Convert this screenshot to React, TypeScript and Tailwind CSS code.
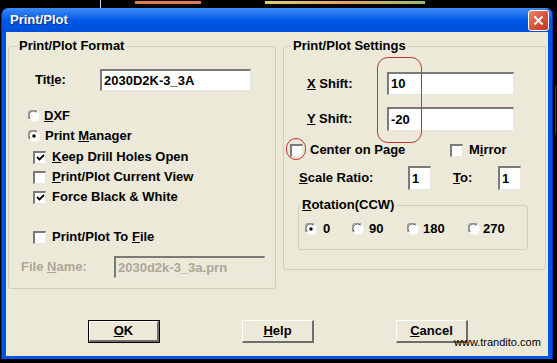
import React from "react"

const font = { fontFamily: '"Liberation Sans", Arial, sans-serif' }

function Radio({ checked }: { checked?: boolean }) {
    return (
        <svg width="12" height="12" viewBox="0 0 12 12" className="shrink-0">
            <circle cx="6" cy="6" r="5.5" fill="#fff" />
            <path d="M1.2 9 A5.5 5.5 0 0 1 9 1.2" fill="none" stroke="#808080" strokeWidth="1" />
            <path d="M2.2 8.6 A4.5 4.5 0 0 1 8.6 2.2" fill="none" stroke="#404040" strokeWidth="1" />
            <path d="M10.8 3 A5.5 5.5 0 0 1 3 10.8" fill="none" stroke="#f4f4f4" strokeWidth="1" />
            {checked && <circle cx="6" cy="6" r="1.7" fill="#000" />}
        </svg>
    )
}

function Check({ checked }: { checked?: boolean }) {
    return (
        <span className="w-[13px] h-[13px] shrink-0 bg-white border-t-2 border-l-2 border-t-[#7a7a7a] border-l-[#7a7a7a] border-b border-r border-b-[#e8e8e8] border-r-[#e8e8e8] flex items-center justify-center">
            {checked && (
                <svg width="9" height="9" viewBox="0 0 9 9">
                    <path d="M1 4 L3.5 6.5 L8 2" fill="none" stroke="#000" strokeWidth="1.8" />
                </svg>
            )}
        </span>
    )
}

function Field({ value, className, disabled }: { value: string; className: string; disabled?: boolean }) {
    return (
        <div
            className={`${className} ${disabled ? "bg-[#ece9d8] text-[#aca899]" : "bg-white text-black"} border-t-2 border-l-2 border-t-[#7a7a7a] border-l-[#7a7a7a] border-b border-r border-b-[#e6e6e6] border-r-[#e6e6e6] flex items-center pl-[2px] text-[13px] font-bold`}
        >
            {value}
        </div>
    )
}

function Btn({ children, primary }: { children: React.ReactNode; primary?: boolean }) {
    return (
        <div className={`w-[72px] h-[23px] ${primary ? "border border-black" : ""}`}>
            <div className="w-full h-full bg-[#ece9d8] border-t border-l border-t-white border-l-white border-b-2 border-r-2 border-b-[#6e6e6e] border-r-[#6e6e6e] flex items-center justify-center text-[13px] font-bold">
                {children}
            </div>
        </div>
    )
}

export default function App() {
    return (
        <div className="w-[557px] h-[363px] bg-black relative overflow-hidden" style={font}>
            {/* desktop bits above the window */}
            <div className="h-[8px] flex items-start">
                <div className="ml-[100px] w-[1px] h-[8px] bg-[#cfd8ff]" />
                <div className="ml-[34px] mt-[1px] w-[66px] h-[3px] bg-[#e07a58]" />
                <div className="ml-[64px] mt-[1px] w-[160px] h-[3px] bg-gradient-to-r from-[#d6d06a] via-[#e8a060] to-[#8fbf6a]" />
            </div>

            <div className="ml-[1px] w-[552px] h-[351px] rounded-t-[7px] bg-[#0054e3] border-x border-x-[#0831a8] flex flex-col">
                <div className="h-[24px] rounded-t-[7px] bg-gradient-to-b from-[#3d8cf5] via-[#0058e6] to-[#0050d8] flex items-center justify-between pl-[8px] pr-[3px]">
                    <span className="text-white text-[13px] font-bold [text-shadow:1px_1px_#0a2a8a]">Print/Plot</span>
                    <div className="w-[21px] h-[21px] rounded-[3px] border border-white bg-gradient-to-br from-[#e58a6c] via-[#d8553a] to-[#b83c22] flex items-center justify-center">
                        <svg width="11" height="11" viewBox="0 0 11 11">
                            <path d="M1.5 1.5 L9.5 9.5 M9.5 1.5 L1.5 9.5" stroke="#fff" strokeWidth="2" />
                        </svg>
                    </div>
                </div>

                <div className="mx-[4px] h-[324px] bg-[#ece9d8] text-black relative">
                    <div className="flex items-start pt-[7px]">
                        {/* left group */}
                        <fieldset className="ml-[2px] w-[268px] h-[250px] border border-[#d0d0bf] rounded-[3px] p-0">
                            <legend className="ml-[8px] px-[2px] leading-[14px] text-[13px] font-bold">Print/Plot Format</legend>
                            <div className="mt-[16px] h-[22px] flex items-center">
                                <span className="ml-[26px] w-[65px] text-[13px] font-bold">
                                    Tit<u>l</u>e:
                                </span>
                                <Field value="2030D2K-3_3A" className="w-[151px] h-[22px]" />
                            </div>
                            <div className="mt-[15px] h-[20px] flex items-center ml-[19px] gap-[4px] text-[13px] font-bold">
                                <Radio />
                                <span>
                                    <u>D</u>XF
                                </span>
                            </div>
                            <div className="h-[20px] flex items-center ml-[19px] gap-[5px] text-[13px] font-bold">
                                <Radio checked />
                                <span>
                                    Print <u>M</u>anager
                                </span>
                            </div>
                            <div className="mt-[1px] h-[20px] flex items-center ml-[24px] gap-[6px] text-[13px] font-bold">
                                <Check checked />
                                <span>
                                    <u>K</u>eep Drill Holes Open
                                </span>
                            </div>
                            <div className="h-[20px] flex items-center ml-[24px] gap-[6px] text-[13px] font-bold">
                                <Check />
                                <span>
                                    <u>P</u>rint/Plot Current View
                                </span>
                            </div>
                            <div className="h-[20px] flex items-center ml-[24px] gap-[6px] text-[13px] font-bold">
                                <Check checked />
                                <span>Force Black &amp; White</span>
                            </div>
                            <div className="mt-[20px] h-[20px] flex items-center ml-[24px] gap-[6px] text-[13px] font-bold">
                                <Check />
                                <span>
                                    Print/Plot To <u>F</u>ile
                                </span>
                            </div>
                            <div className="mt-[9px] h-[22px] flex items-center">
                                <span className="ml-[12px] w-[93px] text-[13px] font-bold text-[#aca899]">
                                    File <u>N</u>ame:
                                </span>
                                <Field value="2030d2k-3_3a.prn" className="w-[151px] h-[22px]" disabled />
                            </div>
                        </fieldset>

                        {/* right group */}
                        <fieldset className="ml-[7px] w-[263px] h-[231px] border border-[#d0d0bf] rounded-[3px] p-0">
                            <legend className="ml-[7px] px-[2px] leading-[14px] text-[13px] font-bold">Print/Plot Settings</legend>
                            <div className="mt-[19px] h-[23px] flex items-center">
                                <span className="ml-[23px] w-[80px] text-[13px] font-bold">
                                    <u>X</u> Shift:
                                </span>
                                <Field value="10" className="w-[127px] h-[23px]" />
                            </div>
                            <div className="mt-[12px] h-[24px] flex items-center">
                                <span className="ml-[23px] w-[80px] text-[13px] font-bold">
                                    <u>Y</u> Shift:
                                </span>
                                <Field value="-20" className="w-[127px] h-[24px]" />
                            </div>
                            <div className="mt-[9px] h-[20px] flex items-center text-[13px] font-bold">
                                <div className="ml-[6px] w-[160px] flex items-center gap-[7px]">
                                    <Check />
                                    <span>Center on Page</span>
                                </div>
                                <div className="flex items-center gap-[6px]">
                                    <Check />
                                    <span>
                                        M<u>i</u>rror
                                    </span>
                                </div>
                            </div>
                            <div className="mt-[6px] h-[24px] flex items-center text-[13px] font-bold">
                                <span className="ml-[15px] w-[109px]">
                                    <u>S</u>cale Ratio:
                                </span>
                                <Field value="1" className="w-[23px] h-[24px]" />
                                <span className="ml-[22px] w-[45px]">
                                    <u>T</u>o:
                                </span>
                                <Field value="1" className="w-[23px] h-[24px]" />
                            </div>
                            <fieldset className="mt-[8px] ml-[14px] w-[230px] h-[52px] border border-[#d0d0bf] rounded-[3px] p-0">
                                <legend className="ml-[1px] px-[2px] leading-[14px] text-[13px] font-bold">
                                    <u>R</u>otation(CCW)
                                </legend>
                                <div className="mt-[7px] h-[20px] flex items-center text-[13px] font-bold">
                                    <div className="ml-[6px] w-[47px] flex items-center gap-[6px]">
                                        <Radio checked />
                                        <span>0</span>
                                    </div>
                                    <div className="w-[55px] flex items-center gap-[5px]">
                                        <Radio />
                                        <span>90</span>
                                    </div>
                                    <div className="w-[61px] flex items-center gap-[4px]">
                                        <Radio />
                                        <span>180</span>
                                    </div>
                                    <div className="flex items-center gap-[3px]">
                                        <Radio />
                                        <span>270</span>
                                    </div>
                                </div>
                            </fieldset>
                        </fieldset>
                    </div>

                    <div className="mt-[31px] ml-[82px] flex gap-[82px]">
                        <Btn primary>
                            <u>O</u>K
                        </Btn>
                        <Btn>
                            <u>H</u>elp
                        </Btn>
                        <Btn>
                            <u>C</u>ancel
                        </Btn>
                    </div>
                </div>
            </div>

            {/* red markup drawn over the screenshot */}
            <div className="absolute left-[377px] top-[57px] w-[45px] h-[86px] rounded-[11px] border border-[#c8342c]" />
            <div className="absolute left-[286px] top-[138px] w-[20px] h-[22px] rounded-full border border-[#c8342c]" />
            <div className="absolute left-[454px] top-[336px] text-[11px] text-black leading-[13px]">www.trandito.com</div>
            <div className="absolute left-[555px] top-[86px] w-[1px] h-[48px] bg-[#8a2030]" />
        </div>
    )
}
